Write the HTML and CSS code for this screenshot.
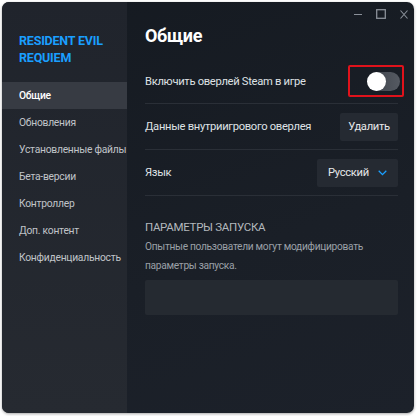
FILE: index.html
```html
<!DOCTYPE html>
<html lang="ru">
<head>
<meta charset="utf-8">
<link rel="stylesheet" href="styles.css">
</head>
<body>
<div class="window">
  <aside class="sidebar">
    <div class="game-title">RESIDENT EVIL<br>REQUIEM</div>
    <nav class="nav">
      <div class="nav-item active">Общие</div>
      <div class="nav-item">Обновления</div>
      <div class="nav-item">Установленные файлы</div>
      <div class="nav-item">Бета-версии</div>
      <div class="nav-item">Контроллер</div>
      <div class="nav-item">Доп. контент</div>
      <div class="nav-item">Конфиденциальность</div>
    </nav>
  </aside>
  <main class="main">
    <div class="titlebar">
      <svg class="wc" width="8" height="10" viewBox="0 0 8 10"><path d="M0 5.5h8" stroke="#8a9099" stroke-width="1.2"/></svg>
      <svg class="wc" width="10" height="10" viewBox="0 0 10 10"><rect x="0.7" y="0.7" width="8.6" height="8.6" fill="none" stroke="#8a9099" stroke-width="1.3"/></svg>
      <svg class="wc" width="8" height="9" viewBox="0 0 8 9"><path d="M0.5 0.5l7 8M7.5 0.5l-7 8" stroke="#8a9099" stroke-width="1.1"/></svg>
    </div>
    <h1 class="page-title">Общие</h1>
    <div class="row row-first">
      <span class="label">Включить оверлей Steam в игре</span>
      <div class="highlight">
        <div class="toggle"><div class="knob"></div></div>
      </div>
    </div>
    <div class="row">
      <span class="label">Данные внутриигрового оверлея</span>
      <button class="btn">Удалить</button>
    </div>
    <div class="row">
      <span class="label">Язык</span>
      <div class="select">Русский
        <svg width="9" height="6" viewBox="0 0 9 6"><path d="M0.7 0.8l3.8 3.8 3.8-3.8" fill="none" stroke="#1a9fff" stroke-width="1.3"/></svg>
      </div>
    </div>
    <section class="launch">
      <div class="section-title">ПАРАМЕТРЫ ЗАПУСКА</div>
      <p class="desc">Опытные пользователи могут модифицировать параметры запуска.</p>
      <div class="input"></div>
    </section>
  </main>
</div>
</body>
</html>
```

FILE: styles.css
```css
* { box-sizing: border-box; }
html, body { margin: 0; padding: 0; background: #ffffff; }
body {
  font-family: Roboto, "Noto Sans", sans-serif;
  width: 417px;
  height: 416px;
  padding: 2px 3px 3px 2px;
}
.window {
  display: flex;
  width: 412px;
  height: 411px;
  border-radius: 7px;
  overflow: hidden;
  background: linear-gradient(160deg, #151a21 0%, #1a1f27 60%, #1c212a 100%);
  box-shadow: 0 1px 3px rgba(0,0,0,0.35);
}
.sidebar {
  width: 125px;
  flex: none;
  background: linear-gradient(180deg, #20242c 0%, #262a31 100%);
  padding-top: 30px;
}
.game-title {
  color: #1a9fff;
  font-weight: 700;
  font-size: 12.5px;
  line-height: 17px;
  padding-left: 17px;
  letter-spacing: -0.2px;
}
.nav { margin-top: 16px; display: flex; flex-direction: column; }
.nav-item {
  height: 27px;
  display: flex;
  align-items: center;
  padding-left: 17px;
  font-size: 10.3px;
  color: #c0c4c9;
  white-space: nowrap;
  letter-spacing: -0.25px;
}
.nav-item.active {
  background: #373b43;
  color: #ffffff;
  font-weight: 500;
}
.main {
  flex: 1;
  padding: 0 16px 0 18px;
  display: flex;
  flex-direction: column;
}
.titlebar {
  height: 22px;
  display: flex;
  justify-content: flex-end;
  align-items: center;
  gap: 14px;
  margin-right: -10px;
  padding-top: 2px;
}
.page-title {
  margin: 0;
  font-size: 18px;
  font-weight: 700;
  color: #ffffff;
  line-height: 24px;
  letter-spacing: -0.3px;
}
.row {
  display: flex;
  justify-content: space-between;
  align-items: center;
  height: 46px;
  border-bottom: 1px solid #2a2f37;
}
.row-first { height: 45px; margin-top: 11px; }
.label {
  font-size: 11.2px;
  color: #dfe2e5;
  white-space: nowrap;
  letter-spacing: -0.3px;
}
.highlight {
  border: 2px solid #e0121b;
  border-radius: 2px;
  width: 56px;
  height: 32px;
  margin-right: -6px;
  padding: 5px 3px 0 17px;
}
.toggle {
  width: 33px;
  height: 19px;
  border-radius: 10px;
  background: linear-gradient(90deg, #3b4048, #555a62);
  position: relative;
}
.knob {
  position: absolute;
  left: 0;
  top: 0;
  width: 19px;
  height: 19px;
  border-radius: 50%;
  background: #ffffff;
}
.btn {
  font-family: inherit;
  border: none;
  border-radius: 2px;
  background: #252a32;
  color: #e6e8ea;
  font-size: 11.2px;
  letter-spacing: -0.3px;
  height: 28px;
  width: 58px;
  padding: 0;
}
.select {
  display: flex;
  align-items: center;
  gap: 9px;
  background: #252a32;
  border-radius: 2px;
  height: 28px;
  width: 81px;
  padding-left: 11px;
  color: #e6e8ea;
  font-size: 11.2px;
  letter-spacing: -0.3px;
}
.launch { padding-top: 23px; }
.section-title {
  font-size: 11.5px;
  color: #b3b8bd;
  line-height: 16px;
  letter-spacing: -0.3px;
}
.desc {
  margin: 2px 0 0 0;
  font-size: 10.2px;
  line-height: 19px;
  color: #9aa0a7;
  width: 240px;
  letter-spacing: -0.3px;
}
.input {
  margin-top: 5px;
  height: 35px;
  background: #252a31;
  border-radius: 2px;
}
```
